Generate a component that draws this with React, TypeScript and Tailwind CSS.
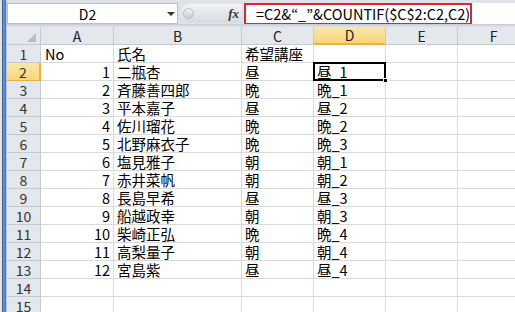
import React from "react";

const rows: [number, string, string][] = [
  [1, "二瓶杏", "昼"],
  [2, "斉藤善四郎", "晩"],
  [3, "平本嘉子", "昼"],
  [4, "佐川瑠花", "晩"],
  [5, "北野麻衣子", "晩"],
  [6, "塩見雅子", "朝"],
  [7, "赤井菜帆", "朝"],
  [8, "長島早希", "昼"],
  [9, "船越政幸", "朝"],
  [10, "柴崎正弘", "晩"],
  [11, "高梨量子", "朝"],
  [12, "宮島紫", "昼"],
];

const font = { fontFamily: '"Noto Sans CJK JP", "Liberation Sans", sans-serif' };

const colHead =
  "h-[18px] flex items-center justify-center border-r border-b border-[#c5cad1] bg-[#e4e7ec] text-[14px] leading-[16px] text-[#222]";
const rowHead =
  "h-[18px] flex items-center justify-center border-r border-b border-[#c5cad1] bg-[#e4e7ec] text-[14px] leading-[16px] text-[#333]";
const cell =
  "h-[18px] flex items-center border-r border-b border-[#dadada] bg-white text-[14.5px] leading-[16px] text-black whitespace-nowrap";

function countUpTo(i: number) {
  const c = rows[i][2];
  return rows.slice(0, i + 1).filter((r) => r[2] === c).length;
}

function FormulaBar() {
  return (
    <div className="flex h-[27px] flex-col bg-[#dfe3e8]">
      <div className="flex h-[24px] items-start pt-[3px]">
        <div className="flex h-[21px] w-[171px] items-center border border-[#b9bfc7] bg-white">
          <div className="flex-1 text-center text-[14px] leading-[16px] text-black">D2</div>
          <div className="mr-[2px] h-0 w-0 border-x-[4px] border-t-[4px] border-x-transparent border-t-[#333]" />
        </div>
        <div className="ml-[2px] mt-[1px] flex h-[19px] w-[62px] items-center rounded-l-full bg-gradient-to-b from-[#f1f3f5] to-[#d7dbe0] pl-[3px]">
          <div className="h-[11px] w-[11px] rounded-full border border-[#b5bbc3] bg-gradient-to-b from-[#f4f5f7] to-[#c8cdd3]" />
          <div className="flex-1" />
          <span
            className="mr-[3px] text-[13px] font-bold italic leading-[16px] text-[#333]"
            style={{ fontFamily: '"Liberation Serif", serif' }}
          >
            fx
          </span>
        </div>
        <div className="ml-[2px] flex h-[22px] flex-1 items-center bg-white">
          <div className="flex h-[22px] w-[228px] items-center border-2 border-[#e3232b] pl-[10px] text-[14.5px] leading-[16px] text-black">
            =C2&amp;“_”&amp;COUNTIF($C$2:C2,C2)
          </div>
        </div>
      </div>
      <div className="h-[3px] border-t border-[#c7ccd2] bg-[#d8dde3]" />
    </div>
  );
}

export default function App() {
  const cols = ["A", "B", "C", "D", "E", "F"];
  return (
    <div className="flex h-[312px] w-[515px] overflow-hidden bg-white" style={font}>
      <div className="flex w-[7px] shrink-0">
        <div className="w-[2px] bg-[#dfe3e8]" />
        <div className="w-[1px] bg-[#3a64a8]" />
        <div className="w-[3px] bg-gradient-to-r from-[#6d93cf] to-[#4d78bd]" />
        <div className="w-[1px] bg-[#b9c3d0]" />
      </div>
      <div className="flex min-w-0 flex-1 flex-col">
        <FormulaBar />
        <div className="grid grid-cols-[34px_73px_128px_72px_72px_72px_72px]">
          <div className={colHead + " relative"}>
            <div className="absolute bottom-[2px] right-[4px] h-0 w-0 border-b-[9px] border-l-[9px] border-b-[#b7bcc3] border-l-transparent" />
          </div>
          {cols.map((c) =>
            c === "D" ? (
              <div
                key={c}
                className="h-[18px] flex items-center justify-center border-r border-b-2 border-r-[#c5cad1] border-b-[#f0b03c] bg-gradient-to-b from-[#fce7a8] to-[#f8d57a] text-[14px] leading-[16px] text-[#222]"
              >
                {c}
              </div>
            ) : (
              <div key={c} className={colHead}>
                {c}
              </div>
            )
          )}

          <div className={rowHead}>1</div>
          <div className={cell + " pl-[4px]"}>No</div>
          <div className={cell + " pl-[3px]"}>氏名</div>
          <div className={cell + " pl-[3px]"}>希望講座</div>
          <div className={cell} />
          <div className={cell} />
          <div className={cell} />

          {rows.map(([n, name, course], i) => {
            const r = i + 2;
            const sel = r === 2;
            return (
              <React.Fragment key={r}>
                {sel ? (
                  <div className="h-[18px] flex items-center justify-center border-r-2 border-b border-r-[#f0b03c] border-b-[#e6b04a] bg-gradient-to-b from-[#fce7a8] to-[#f8d57a] text-[14px] leading-[16px] text-[#333]">
                    {r}
                  </div>
                ) : (
                  <div className={rowHead}>{r}</div>
                )}
                <div className={cell + " justify-end pr-[3px]"}>{n}</div>
                <div className={cell + " pl-[3px]"}>{name}</div>
                <div className={cell + " pl-[3px]"}>{course}</div>
                <div className={cell + (sel ? " relative" : "") + " pl-[3px]"}>
                  {course}_{countUpTo(i)}
                  {sel && (
                    <>
                      <div className="absolute -left-[1px] -top-[1px] h-[19px] w-[73px] border-2 border-black" />
                      <div className="absolute -bottom-[3px] -right-[3px] h-[5px] w-[5px] border border-white bg-black" />
                    </>
                  )}
                </div>
                <div className={cell} />
                <div className={cell} />
              </React.Fragment>
            );
          })}

          {[14, 15].map((r) => (
            <React.Fragment key={r}>
              <div className={rowHead}>{r}</div>
              <div className={cell} />
              <div className={cell} />
              <div className={cell} />
              <div className={cell} />
              <div className={cell} />
              <div className={cell} />
            </React.Fragment>
          ))}
        </div>
      </div>
    </div>
  );
}
